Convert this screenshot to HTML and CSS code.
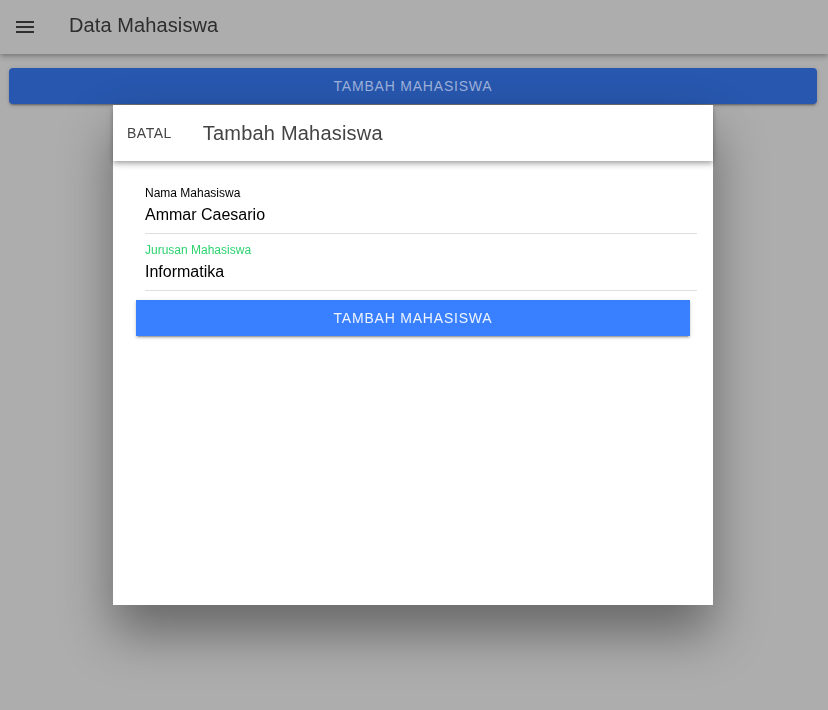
FILE: index.html
```html
<!DOCTYPE html>
<html lang="id">
<head>
<meta charset="utf-8">
<title>Data Mahasiswa</title>
<link rel="stylesheet" href="styles.css">
</head>
<body>
<div class="app">
  <header class="toolbar">
    <span class="menu-btn">
      <svg width="24" height="24" viewBox="0 0 24 24"><path d="M3 18h18v-2H3v2zm0-5h18v-2H3v2zm0-7v2h18V6H3z" fill="#2f2f2f"/></svg>
    </span>
    <span class="toolbar-title">Data Mahasiswa</span>
  </header>
  <main class="page-content">
    <button class="page-btn">TAMBAH MAHASISWA</button>
  </main>
</div>

<div class="modal-wrap">
  <div class="modal">
    <div class="modal-header">
      <button class="cancel-btn">BATAL</button>
      <span class="modal-title">Tambah Mahasiswa</span>
    </div>
    <div class="modal-content">
      <div class="item">
        <label class="item-label">Nama Mahasiswa</label>
        <div class="item-input">Ammar Caesario</div>
      </div>
      <div class="item">
        <label class="item-label focused">Jurusan Mahasiswa</label>
        <div class="item-input">Informatika</div>
      </div>
      <button class="submit-btn">TAMBAH MAHASISWA</button>
    </div>
  </div>
</div>
</body>
</html>
```

FILE: styles.css
```css
* { box-sizing: border-box; }
html, body {
  margin: 0;
  height: 100%;
}
body {
  background: #adadad;
  font-family: "Liberation Sans", Arial, sans-serif;
  overflow: hidden;
}
.app {
  height: 100%;
  display: flex;
  flex-direction: column;
}
.toolbar {
  height: 54px;
  background: #adadad;
  display: flex;
  align-items: center;
  box-shadow: 0 2px 4px -1px rgba(0,0,0,.2), 0 4px 5px 0 rgba(0,0,0,.1), 0 1px 8px 0 rgba(0,0,0,.1);
  position: relative;
  z-index: 1;
}
.menu-btn {
  width: 24px;
  height: 24px;
  margin-left: 13px;
  margin-bottom: 1px;
  display: flex;
}
.toolbar-title {
  margin-left: 32px;
  font-size: 20px;
  color: #2e2e2e;
  letter-spacing: 0.1px;
  margin-bottom: 3px;
}
.page-content {
  flex: 1;
}
.page-btn {
  display: block;
  margin: 14px 11px 0 9px;
  width: calc(100% - 20px);
  height: 36px;
  border: none;
  border-radius: 4px;
  background: #2757ae;
  color: #9db1da;
  font-family: "Liberation Sans", Arial, sans-serif;
  font-size: 14px;
  letter-spacing: 0.8px;
  box-shadow: 0 3px 1px -2px rgba(0,0,0,.2), 0 2px 2px 0 rgba(0,0,0,.14), 0 1px 5px 0 rgba(0,0,0,.12);
}
.modal-wrap {
  position: fixed;
  inset: 0;
  display: flex;
  align-items: center;
  justify-content: center;
  padding-right: 2px;
}
.modal {
  width: 600px;
  height: 500px;
  background: #fff;
  display: flex;
  flex-direction: column;
  box-shadow: 0 28px 48px rgba(0,0,0,.4);
}
.modal-header {
  height: 56px;
  display: flex;
  align-items: center;
  background: #fff;
  position: relative;
  z-index: 1;
  box-shadow: 0 2px 4px -1px rgba(0,0,0,.2), 0 4px 5px 0 rgba(0,0,0,.14), 0 1px 10px 0 rgba(0,0,0,.12);
}
.cancel-btn {
  margin-left: 14px;
  padding: 0;
  border: none;
  background: none;
  font-family: "Liberation Sans", Arial, sans-serif;
  font-size: 14px;
  color: #444;
  letter-spacing: 0.5px;
}
.modal-title {
  margin-left: 31px;
  font-size: 20px;
  color: #444;
  letter-spacing: 0.2px;
}
.modal-content {
  flex: 1;
  padding: 16px 16px 0 16px;
  display: flex;
  flex-direction: column;
}
.item {
  margin-left: 16px;
  height: 57px;
  border-bottom: 1px solid #dedede;
  padding-top: 9px;
  display: flex;
  flex-direction: column;
}
.item-label {
  font-size: 12px;
  line-height: 14px;
  color: #000;
}
.item-label.focused {
  color: #2dd36f;
}
.item-input {
  margin-top: 5px;
  font-size: 16px;
  line-height: 20px;
  color: #000;
}
.submit-btn {
  margin: 9px 7px 0 7px;
  height: 36px;
  border: none;
  border-radius: 0;
  background: #3880ff;
  color: #eef3ff;
  font-family: "Liberation Sans", Arial, sans-serif;
  font-size: 14px;
  letter-spacing: 0.8px;
  box-shadow: 0 3px 1px -2px rgba(0,0,0,.2), 0 2px 2px 0 rgba(0,0,0,.14), 0 1px 5px 0 rgba(0,0,0,.12);
}
```
